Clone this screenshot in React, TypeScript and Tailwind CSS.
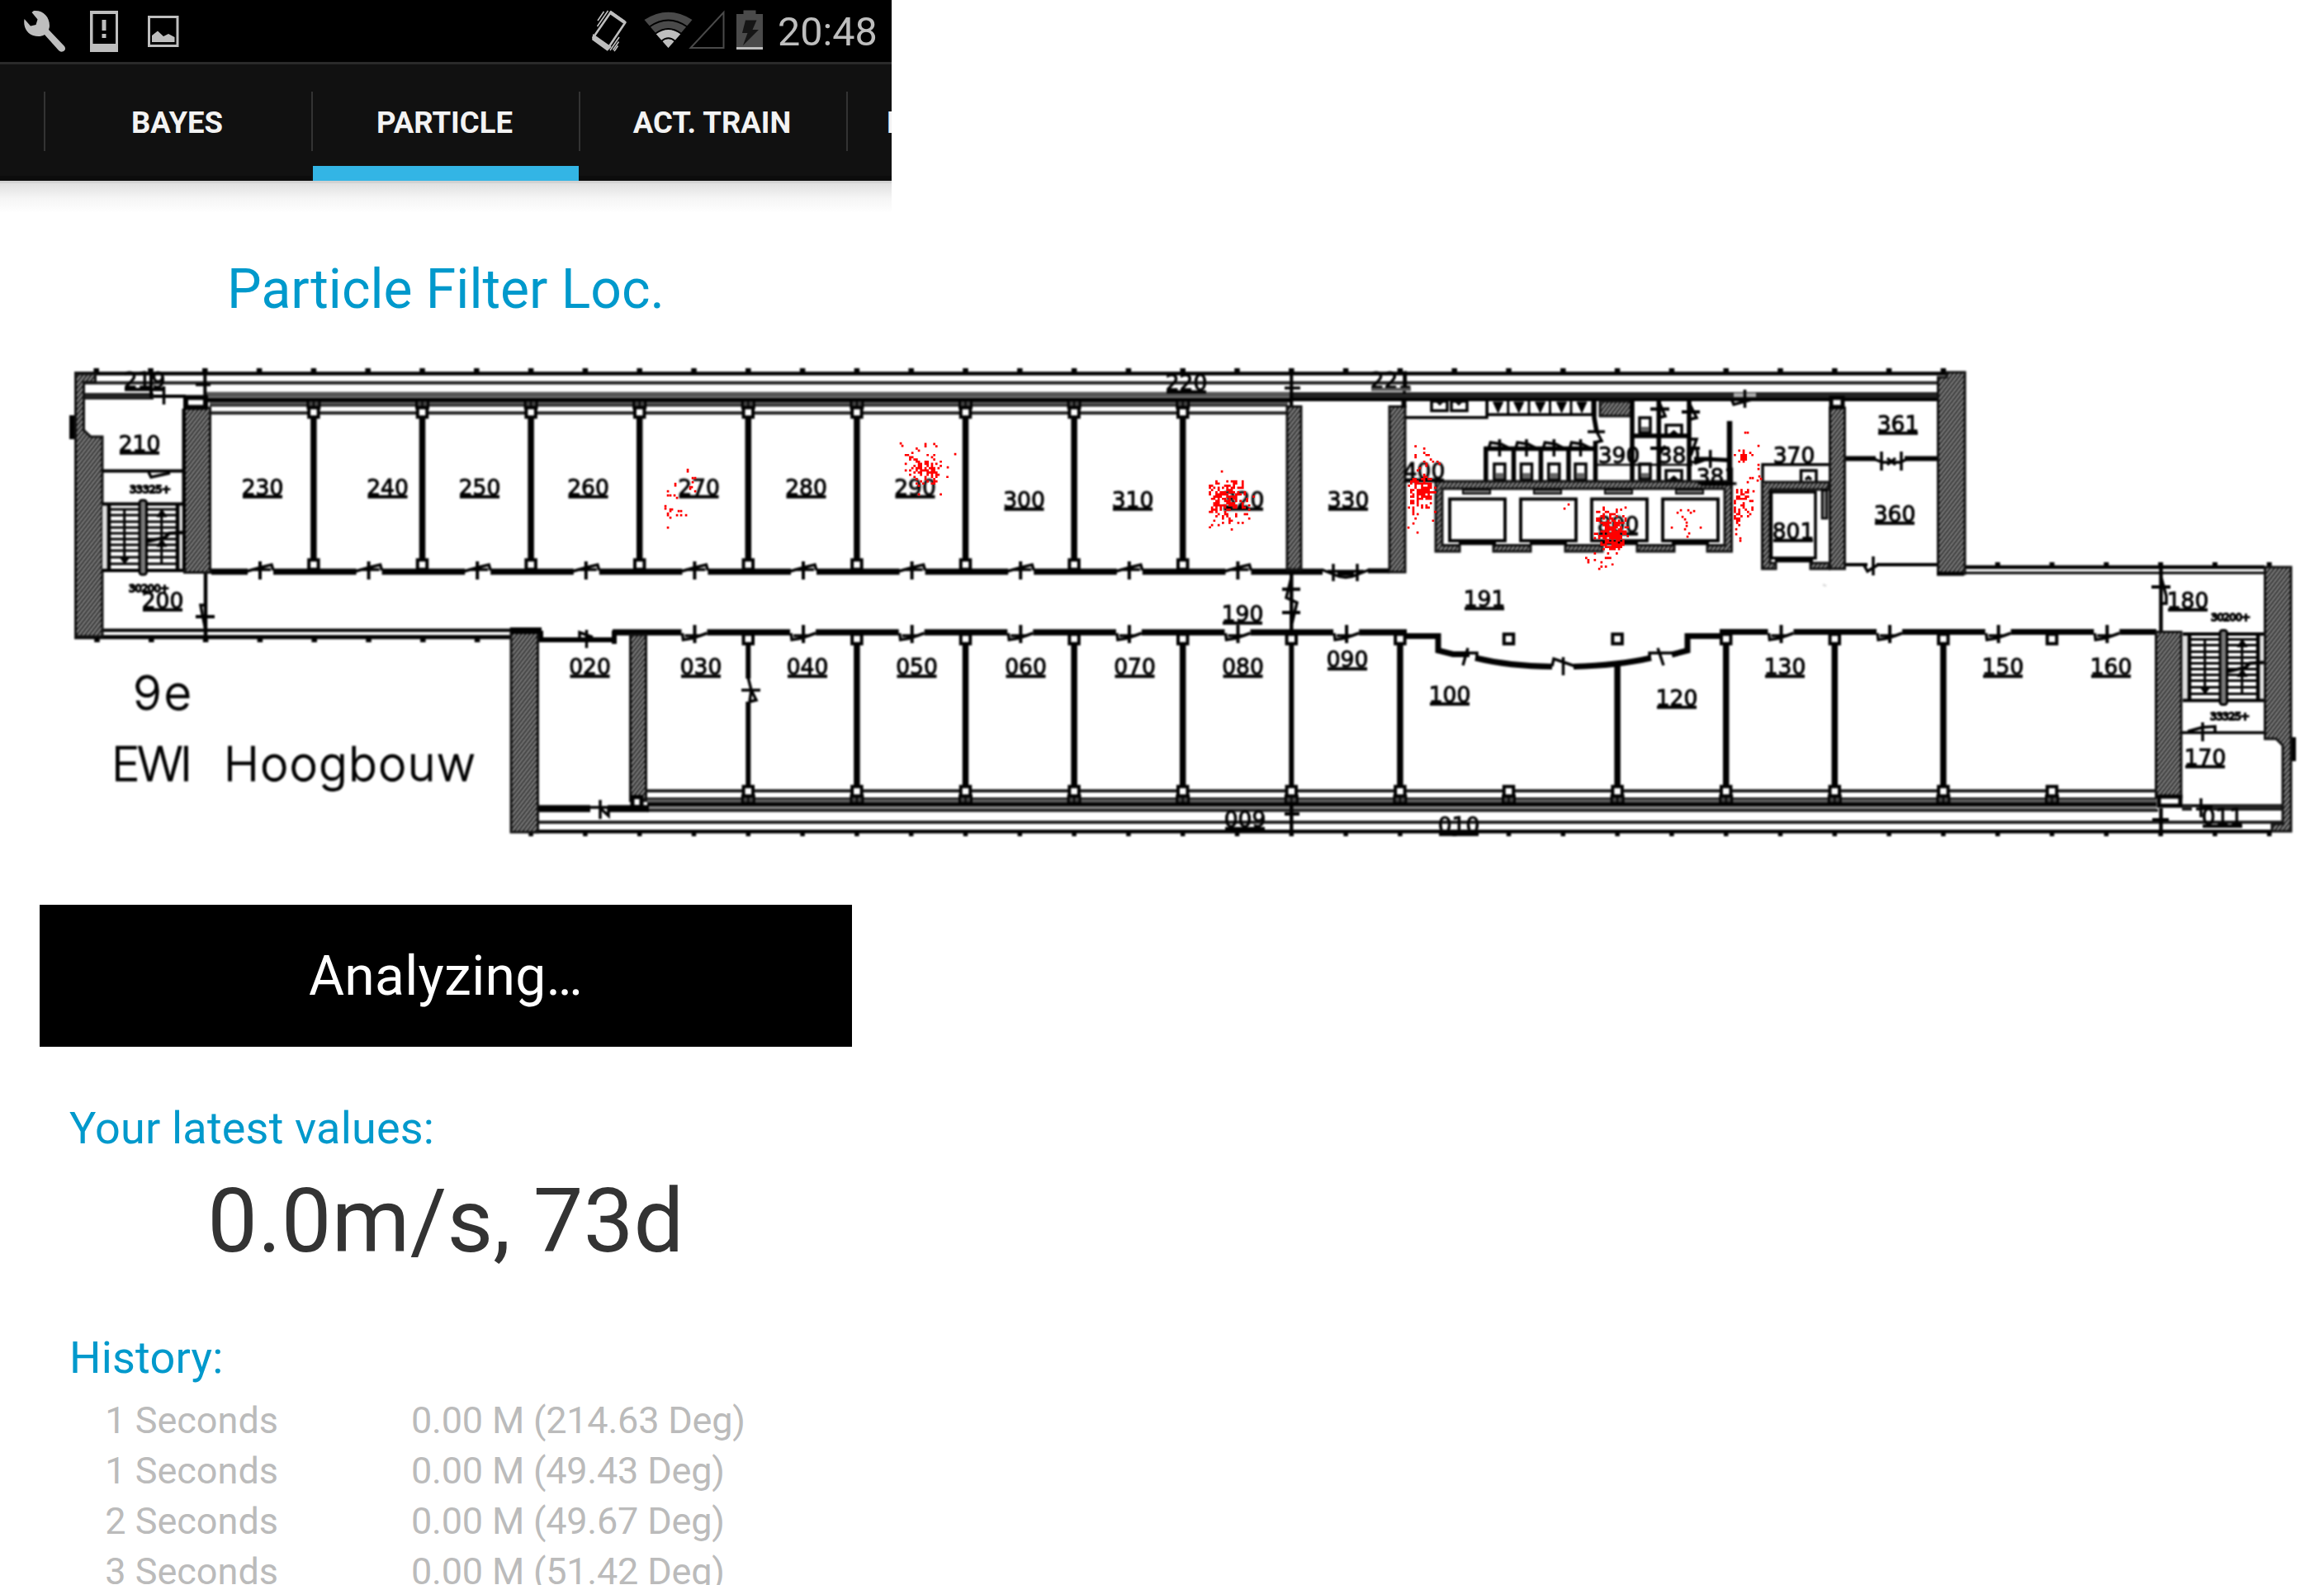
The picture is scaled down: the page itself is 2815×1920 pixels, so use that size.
import React from "react";

const PITCH = 131.6;
const col = (i: number) => 248.3 + PITCH * i;
const range = (a: number, b: number) => Array.from({ length: b - a + 1 }, (_, i) => a + i);

/* ---------- status bar ---------- */

function StatusBar() {
  return (
    <div className="flex h-[75px] items-center bg-black">
      <svg className="h-[75px] w-[240px]" viewBox="0 0 240 75" fill="#bebebe">
        <path d="M41 13C52 12 60 20 60 31C60 33 59.500 34.500 59 36L78 56C80 59 79 61.500 76 62.500C73 63 72 62 71 61L54 42C50 44.500 45 44.500 40 43C32 40 28 32 29.500 23L37 31.500L43.500 30L45.500 23.500L38.500 15Z" />
        <path fillRule="evenodd" d="M109 13H143V63H109ZM112.500 17V53H140V17ZM123.500 24H128.500V37H123.500ZM123.500 41H128.500V46H123.500Z" />
        <rect x="180.500" y="20.500" width="34.500" height="35" fill="none" stroke="#bebebe" strokeWidth="3" />
        <path d="M184 43L191 37.500L198 44L204 41L211.500 45V51H184Z" />
      </svg>
      <svg className="ml-[460px] h-[75px] w-[230px]" viewBox="700 0 230 75">
        <g fill="none" stroke="#bebebe">
          <path d="M740 14.500L757.500 27L736 59L718.500 45.500Z" strokeWidth="2.600" strokeLinejoin="round" />
          <path d="M719.500 44L738 57L735.500 59.500L719 47.500Z" strokeWidth="3.500" fill="#bebebe" />
          <path d="M738.500 14.500L756.500 27" strokeWidth="4" />
          <path d="M736.500 13L723.500 32M731.500 14L724 25M742.500 60.500L749.500 50.500M739 61L750 45M744 62L748.500 55.500" strokeWidth="1.600" />
        </g>
        <g>
          <path d="M809.500 58L780.500 24Q809.500 5.500 838.500 24Z" fill="#4a4a4a" />
          <path d="M809.500 58L794.500 41Q809.500 30.500 824.500 41Z" fill="#bebebe" />
          <g fill="none" stroke="#000" strokeWidth="1.800">
            <path d="M786.500 32.500Q809.500 16.500 832.500 32.500M793.500 41Q809.500 29 825.500 41M801 50Q809.500 42.500 818 50" />
          </g>
        </g>
        <path d="M836.500 58H876.500V15Z" fill="none" stroke="#4a4a4a" strokeWidth="2" />
        <path d="M892 17H900.500V12.500H915.500V17H924V57H892Z" fill="#4a4a4a" />
        <rect x="892" y="57" width="32" height="3" fill="#bebebe" />
        <path d="M903 24.500H916.500L911.500 36H919L900 55L905.500 40H899Z" fill="#151515" />
      </svg>
      <span className="ml-[12px] pt-[2px] text-[48.500px] leading-[75px] text-[#bebebe]">20:48</span>
    </div>
  );
}

/* ---------- tabs ---------- */

function Tab({ label, active }: { label: string; active?: boolean }) {
  return (
    <div className="flex h-[141px] w-[324px] shrink-0 flex-col">
      <div className="mt-[33px] flex h-[72px] items-center justify-center border-l-2 border-[#333333] pt-[4px] pr-[3px] text-[36.500px] font-bold text-[#f3f3f3]">
        {label}
      </div>
      <div className={active ? "mt-[18px] ml-[2px] h-[18px] bg-[#33b5e5]" : "mt-[30px] h-[6px] bg-[#0c0c0c]"} />
    </div>
  );
}

function TabBar() {
  return (
    <div className="flex h-[144px] overflow-hidden border-t-[3px] border-[#2a2a2a] bg-[#111111]">
      <div className="mt-[135px] h-[6px] w-[53px] shrink-0 bg-[#0c0c0c]" />
      <Tab label="BAYES" />
      <Tab label="PARTICLE" active />
      <Tab label="ACT. TRAIN" />
      <div className="flex h-[141px] w-[324px] shrink-0 flex-col">
        <div className="mt-[33px] flex h-[72px] items-center border-l-2 border-[#333333] pt-[4px] pl-[47px] text-[36.500px] font-bold text-[#f3f3f3]">
          MAP
        </div>
        <div className="mt-[30px] h-[6px] bg-[#0c0c0c]" />
      </div>
    </div>
  );
}

/* ---------- floor plan ---------- */

const rooms: [string, number, number][] = [
  ["219", 175, 470], ["210", 169, 547], ["200", 197, 737], ["230", 318, 600], ["240", 469.5, 600],
  ["250", 581, 600], ["260", 712.5, 600], ["270", 846.5, 600], ["280", 976.5, 600], ["290", 1108.5, 600],
  ["300", 1240.5, 615], ["310", 1372, 615], ["320", 1506, 615], ["330", 1633, 615], ["220", 1437, 473],
  ["221", 1685, 470], ["190", 1505, 753], ["191", 1798, 735.5], ["400", 1725, 580], ["390", 1961, 561],
  ["380", 2034, 561], ["381", 2080, 587], ["370", 2173, 561], ["801", 2172, 653], ["800", 1960, 645],
  ["361", 2299, 523], ["360", 2295, 632], ["180", 2650, 737], ["170", 2671, 927], ["011", 2692, 999],
  ["020", 714.5, 817.5], ["030", 849, 817.5], ["040", 978, 817.5], ["050", 1110.5, 817.5], ["060", 1242.5, 817.5],
  ["070", 1374.5, 817.5], ["080", 1505.5, 817.5], ["090", 1632, 808.5], ["009", 1508, 1002], ["010", 1767, 1009],
  ["100", 1756, 851], ["120", 2031, 855], ["130", 2162, 817.5], ["150", 2426, 817.5], ["160", 2557, 817.5],
];

function Hatch({ d }: { d: string }) {
  return <path d={d} fill="url(#hatch)" stroke="#111" strokeWidth="3" />;
}

function Box({ x, y, w = 11.5, h = 11.5, s = 4 }: { x: number; y: number; w?: number; h?: number; s?: number }) {
  return <rect x={x - w / 2} y={y - h / 2} width={w} height={h} fill="#fff" stroke="#000" strokeWidth={s} />;
}

function Stairs({ dx, dy }: { dx: number; dy: number }) {
  return (
    <g transform={`translate(${dx} ${dy})`} stroke="#000" fill="none">
      <rect x="124" y="612" width="6" height="78" fill="#ddd" stroke="none" />
      <rect x="216" y="612" width="5" height="78" fill="#ddd" stroke="none" />
      <path d="M124 610.500H222M124 691H222" strokeWidth="4" />
      <path d="M132 610V690M215 610V690" strokeWidth="4.500" />
      {[617, 624, 632, 639, 646, 653, 660, 667, 675, 683].map((y) => (
        <path key={y} d={`M133 ${y}H214`} strokeWidth="3" />
      ))}
      <path d="M150.700 618V680M195.700 620V684" strokeWidth="3" />
      <path d="M145 675H157L151 683ZM190 626H202L196 617ZM190 662H202L196 653Z" fill="#000" />
      <path d="M178 656L200 651L205 646L222 645" strokeWidth="4" />
      <rect x="169" y="606" width="8.500" height="90" rx="3" fill="#777" strokeWidth="3" />
    </g>
  );
}

function Plan() {
  const upperDoors = range(0, 9).map((i) => 315 + PITCH * i);
  const lowerDoors = [...range(0, 6), 10, 11, 12, 13].map((i) => 841.5 + PITCH * i);
  const upperEdges = [256, ...upperDoors.flatMap((x) => [x - 15, x + 16]), 1602];
  const lowerLeft = [742, ...range(0, 6).flatMap((i) => [841.5 + PITCH * i - 16, 841.5 + PITCH * i + 15]), 1704];
  const lowerRight = [2083, ...range(10, 13).flatMap((i) => [841.5 + PITCH * i - 16, 841.5 + PITCH * i + 15]), 2612];
  const walls = (edges: number[], y: number) =>
    range(0, edges.length / 2 - 1).map((k) => `M${edges[2 * k]} ${y}H${edges[2 * k + 1]}`).join("");
  return (
    <g className="blur-[0.8px]">
      {/* outer façade, north side */}
      <g stroke="#000" fill="none">
        <path d="M90 452.500H2358" strokeWidth="4.500" />
        <path d="M102 463.700H2346" strokeWidth="4" stroke="#222" />
        <path d="M250 478H1562" strokeWidth="6.500" stroke="#555" />
        <path d="M250 484.500H1562" strokeWidth="5.500" />
        <path d="M254 489.500H1560" strokeWidth="5.500" stroke="#555" />
        <path d="M254 491.500H1560" strokeWidth="1.500" />
        <path d="M256 500.300H1560" strokeWidth="4" stroke="#222" />
        <path d="M1562 480H2346" strokeWidth="10" stroke="#222" />
        <path d="M1562 484H2346" strokeWidth="4" />
        <path d="M102 480H186" strokeWidth="8" stroke="#222" />
        <path d="M186 480H225" strokeWidth="4" />
        {range(0, 34).map((k) => (
          <path key={k} d={`M${116.7 + 65.8 * k} 446V453`} strokeWidth="6.500" />
        ))}
        <path d="M183 446V482M248.300 446V482M1564.300 446V495M1564 495V480" strokeWidth="4" />
        <path d="M237 466H255M1556 470H1575M1701 452V477M198.500 468V490M188 471H200" strokeWidth="3.500" />
      </g>

      {/* long façade lines, south side */}
      <g stroke="#000" fill="none">
        <path d="M125 763.500H620" strokeWidth="4" />
        <path d="M90 771.800H618" strokeWidth="5" />
        {range(0, 7).map((k) => (
          <path key={k} d={`M${117.5 + 65.8 * k} 772V778`} strokeWidth="6.500" />
        ))}
        <path d="M2379 687H2743" strokeWidth="4.500" />
        <path d="M2379 694H2743" strokeWidth="3" />
        {range(35, 40).map((k) => (
          <path key={k} d={`M${116.7 + 65.8 * k} 681V688`} strokeWidth="6" />
        ))}
        <path d="M784 958H2610" strokeWidth="4" stroke="#222" />
        <path d="M784 969.500H2612" strokeWidth="7" stroke="#5a5a5a" />
        <path d="M784 967H2612" strokeWidth="1.500" />
        <path d="M784 974.500H2612" strokeWidth="4.500" />
        <path d="M784 978.500H2612" strokeWidth="3" stroke="#888" />
        <path d="M784 981.800H2614" strokeWidth="3.500" stroke="#1a1a1a" />
        <path d="M652 996H2764" strokeWidth="4" stroke="#222" />
        <path d="M645 1007.300H2752" strokeWidth="4.500" />
        {range(8, 40).map((k) => (
          <path key={k} d={`M${116.7 + 65.8 * k} 1007V1013`} strokeWidth="5.500" />
        ))}
        <path d="M652 979.500H715M736 979.500H786" strokeWidth="8.500" />
        <path d="M714 978H738M727 969V992M727 979L737 988V979" strokeWidth="3.500" />
        <path d="M2643 978H2655M2680 978H2764" strokeWidth="8" stroke="#222" />
        <path d="M2655 976H2680M2666 967V990M2660 980L2680 979" strokeWidth="3.500" />
      </g>

      {/* corridor walls */}
      <g stroke="#000" fill="none">
        <path d={walls(upperEdges, 692.5)} strokeWidth="7.500" />
        <path d="M1657 691.500H1683" strokeWidth="6" />
        <path d="M1601 690L1616 696Q1630 703 1644 696L1659 690M1608 692H1652M1615 683V704M1644 683V704" strokeWidth="3.500" />
        <path d="M1620 695H1640" strokeWidth="5" />
        <path d={walls(lowerLeft, 766)} strokeWidth="7.500" />
        <path d={walls(lowerRight, 765.5)} strokeWidth="7" />
        {upperDoors.map((x) => (
          <g key={x}>
            <path d={`M${x - 16} 692L${x + 2} 687L${x + 14} 684L${x + 16} 691M${x - 10} 690H${x + 13}`} strokeWidth="3.500" />
            <path d={`M${x} 680V702`} strokeWidth="4" />
          </g>
        ))}
        {lowerDoors.map((x) => (
          <g key={x}>
            <path d={`M${x - 15} 767L${x - 14} 775L${x - 2} 773L${x + 15} 767M${x - 12} 770H${x + 8}`} strokeWidth="3.500" />
            <path d={`M${x} 757V779`} strokeWidth="4" />
          </g>
        ))}
        <path d="M652 775H745M655 764V778M744 764V780" strokeWidth="6" />
        <path d="M710.500 763V785M702 773V766L718 772" strokeWidth="3.500" />
        {/* curved lobby wall */}
        <path d="M1700 770.500H1742V788L1760 792.500L1780 792.500" strokeWidth="7" />
        <path d="M1787 797Q1828 807 1880 807.500M1906 807.500Q1960 806 2000 797M2025 793L2044 788V770.500H2086" strokeWidth="7" />
        <path d="M1770 791L1789 791V799M1778 785L1772 806M1880 807L1882 798L1908 807M1893.500 796V818M1998 797V791L2028 791M2008 785L2015 806" strokeWidth="3.500" />
        {/* cross doors in the corridor */}
        <path d="M249 695V775M1564.300 695V766M2617.500 681V766M2617.500 979V1012M1564.300 975V1012" strokeWidth="4.500" />
        <path d="M237 747H260M1553 713.700H1575M1553 742H1575M2606 711H2629M2607 993H2627M1556 986H1574" strokeWidth="4" />
        <path d="M249 733L243 733L245 744L249 763M1564 700L1558 724L1571 730L1565 755M2618 700L2624 722V731H2619" strokeWidth="3.500" />
      </g>

      {/* partitions and columns */}
      {range(1, 9).map((i) => (
        <g key={i}>
          <path d={`M${col(i)} 505V678`} stroke="#000" strokeWidth="7.500" />
          <rect x={col(i) - 7} y="485" width="14" height="9" fill="#444" stroke="#000" strokeWidth="3" />
          <path d={`M${col(i)} 485V494`} stroke="#000" strokeWidth="2" />
          <Box x={col(i)} y={499.5} />
          <Box x={col(i)} y={684} />
        </g>
      ))}
      {[5, 6, 7, 8, 9, 10, 11, 14, 15, 16].map((i) => (
        <path key={i} d={i === 5 ? `M${col(5)} 780V822M${col(5)} 850V953` : `M${col(i)} 780V953`} stroke="#000" strokeWidth={i === 10 || i === 5 ? 6 : 7.5} />
      ))}
      <path d={`M${col(13)} 804V953`} stroke="#000" strokeWidth="7.500" />
      <path d="M906 820L910 836L908 850M898 836H921M910 836L916 848L908 850" fill="none" stroke="#000" strokeWidth="3.500" />
      {range(5, 17).map((i) => (
        <g key={i}>
          <Box x={col(i)} y={774} />
          <rect x={col(i) - 7} y="964" width="14" height="9" fill="#444" stroke="#000" strokeWidth="3" />
          <path d={`M${col(i)} 964V973`} stroke="#000" strokeWidth="2" />
          <Box x={col(i)} y={958.5} />
        </g>
      ))}

      {/* stair wings */}
      <rect x="84" y="503" width="7" height="29" fill="#000" />
      <rect x="2775" y="893" width="6" height="29" fill="#000" />
      <Hatch d="M91.500 453V771H124V529H110L101.500 521V463H115.500V453Z" />
      <Hatch d="M223.500 494H254.500V693.500H223.500Z" />
      <Box x={237} y={487.500} w={24} h={12} s={6} />
      <path d="M124 570.500H222M222.500 495V690" stroke="#000" strokeWidth="4" />
      <path d="M180 572L183 578L206 573" fill="none" stroke="#000" strokeWidth="3.500" />
      <Stairs dx={0} dy={0} />
      <Stairs dx={2520} dy={157.500} />
      <Hatch d="M619 762H651.500V1008H619Z" />
      <path d="M618 764H656" stroke="#000" strokeWidth="8" />
      <Hatch d="M763.500 769H782.500V970H763.500Z" />
      <Box x={771.500} y={971.500} w={11} h={12} s={5} />
      <Hatch d="M2347.500 457H2358V451H2380V695H2347.500Z" />
      <path d="M2346 695H2379" stroke="#000" strokeWidth="5" />
      <Hatch d="M2743.500 687H2775V1007H2752V998H2765V903L2757 895H2743.500Z" />
      <Hatch d="M2611.500 765.500H2642V966H2611.500Z" />
      <Box x={2628} y={970.500} w={26} h={11} s={5} />
      <path d="M2643 887.500H2742" stroke="#000" strokeWidth="3.500" />
      <path d="M2668 875V898M2650 886L2668 881L2683 880V887" fill="none" stroke="#000" strokeWidth="3.500" />

      {/* core */}
      <Hatch d="M1559 492.500H1576V690H1559Z" />
      <Hatch d="M1683 492.500H1702V693H1683Z" />
      <path d="M1700.500 484V494" stroke="#000" strokeWidth="6" />
      <g stroke="#000" fill="none" strokeWidth="3.500">
        <path d="M1703 505.700H1801V486M1801 502.300H1931" />
        <rect x="1734" y="486" width="19" height="11.500" />
        <rect x="1758" y="486" width="19" height="11.500" />
        <path d="M1741 487L1744 490L1747 487M1764 487L1767 490L1770 487" strokeWidth="2" />
        {[1814.6, 1839.7, 1865.6, 1891.5, 1916].map((x) => (
          <path key={x} d={`M${x - 6} 487H${x + 6}L${x} 500Z`} fill="#000" strokeWidth="1" />
        ))}
        <path d="M1801.500 485V503M1826.800 485V503M1852 485V503M1877.500 485V503M1903 485V503M1929 485V503" strokeWidth="3" />
      </g>
      <Hatch d="M1938 486H1976V504H1938Z" />
      <g stroke="#000" fill="none" strokeWidth="5.500">
        <path d="M1931 485V506L1934 523M1932.500 534V583M1977 485V583M2009.300 485V583M2046 485V583M1978 528H2048" />
        <path d="M1799.800 541V583M1833.500 541V583M1866.400 541V583M1900 541V583M1798 543.500H1932" />
        <path d="M2095 510V590" strokeWidth="6.500" />
      </g>
      {[1816.4, 1849, 1882.3, 1914.5].map((x) => (
        <g key={x} stroke="#000" fill="none" strokeWidth="3.500">
          <path d={`M${x - 13} 543L${x - 11} 536L${x + 2} 538L${x + 12} 543M${x} 532V553`} />
          <rect x={x - 6.5} y="562" width="13" height="19" />
          <rect x={x - 5} y="573" width="10" height="7" fill="#666" stroke="none" />
        </g>
      ))}
      <g stroke="#000" fill="none" strokeWidth="3.500">
        <path d="M1923 523H1944M1934 523L1940 534L1932 536" />
        <path d="M1935 563H2050" strokeWidth="2.500" />
        {[506, 562].map((y) => (
          <g key={y}>
            <rect x="1986" y={y} width="13" height="18" />
            <rect x="1988" y={y + 11} width="9" height="6" fill="#666" stroke="none" />
          </g>
        ))}
        <path d="M2018 527V515H2037V527ZM2018 582V570H2037V582ZM2024 526L2027.500 523L2031 526M2024 581L2027.500 578L2031 581" />
        <path d="M1999 495.500H2022M2037 499H2059M1999 543H2022M2045 543H2059" strokeWidth="4" />
        <path d="M2010 488L2017 504L2009 506M2047 490L2055 506L2047 508M2009 552L2017 540M2047 532H2055L2048 552" />
        <path d="M2052 561L2066 556L2095 557.500M2052 556H2074" strokeWidth="5" />
        <path d="M2071.700 545V567" />
      </g>
      <path d="M2100 476H2127V481H2100Z" fill="#aaa" />
      <path d="M2113.500 472V494M2098 485L2100 490L2122 484" fill="none" stroke="#000" strokeWidth="3.500" />

      {/* lifts */}
      <Hatch d="M1739 583H2097.500V668H2068V660.500H2089V592H1747V660.500H1768V668H1739Z" />
      {[1809, 1896, 1983].map((x) => (
        <Hatch key={x} d={`M${x} 660.500H${x + 45}V668H${x}Z`} />
      ))}
      <path d="M1703 582H1745M2060 586H2098" stroke="#000" strokeWidth="5" />
      {[1756, 1842, 1928, 2014].map((x) => (
        <g key={x} stroke="#000" fill="none">
          <rect x={x} y="604.500" width="67" height="50.500" strokeWidth="3.800" />
          <path d={`M${x + 11} 658H${x + 56}`} strokeWidth="4.500" />
          <rect x={x + 16} y="593" width="33" height="5" fill="#777" strokeWidth="2" />
        </g>
      ))}
      <Hatch d="M2134.500 584H2215V593H2144V682H2151V689H2134.500Z" />
      <Hatch d="M2193 682H2216V689H2193Z" />
      <Hatch d="M2216.500 494H2234.500V689H2216.500Z" />
      <Box x={2225} y={487.500} w={14} h={11} s={5} />
      <g stroke="#000" fill="none" strokeWidth="3.500">
        <path d="M2135 583V562.700H2215M2181.500 583V570H2200V583M2187 581L2190.500 578L2194 581" />
        <path d="M2145.500 596H2199V676H2145.500Z" />
        <path d="M2150 679H2196" strokeWidth="4.500" />
        <rect x="2207" y="594" width="6" height="34" fill="#777" strokeWidth="2.500" />
        <path d="M2236 555.600H2272M2307 555.600H2346" strokeWidth="6" />
        <path d="M2270 556L2280 560H2302L2310 556M2279 547V570M2303 547V570M2286 555L2296 563M2296 555L2286 563" />
        <path d="M2236 684H2262M2273 684H2346" strokeWidth="4" />
        <path d="M2258 685L2262 692L2275 684M2269 674V697" />
      </g>
      <path d="M2208 708L2212 710" stroke="#ddd" strokeWidth="3" />

      {/* labels */}
      {rooms.map(([name, x, y]) => {
        const bare = name === "390" || name === "380" || name === "370" || name === "381";
        return (
          <g key={name}>
            <text x={x} y={y - 0.5} textAnchor="middle" fontSize="26.500" stroke="#000" strokeWidth="1" className="font-['DejaVu_Sans',sans-serif]">
              {name}
            </text>
            {!bare && <path d={`M${x - 24} ${y + 1.8}H${x + 24}`} stroke={name === "221" ? "#555" : "#000"} strokeWidth="4" />}
          </g>
        );
      })}
      <g fontSize="13" stroke="#000" strokeWidth="1.800" className="font-['DejaVu_Sans',sans-serif]">
        <text x="157" y="597" textLength="50">33325+</text>
        <text x="156" y="717" textLength="49">30200+</text>
        <text x="2678" y="752" textLength="48">30200+</text>
        <text x="2677" y="872" textLength="48">33325+</text>
      </g>
      <g fontSize="58" fontWeight="300" stroke="#000" strokeWidth="0.800" className="font-['Inter',sans-serif]">
        <text x="161" y="860" textLength="71">9e</text>
        <text x="135" y="946" textLength="98">EWI</text>
        <text x="271" y="946" textLength="305">Hoogbouw</text>
      </g>
    </g>
  );
}

/* ---------- particles ---------- */

type Cloud = { n: number; cx: number; cy: number; sx: number; sy: number; box: [number, number, number, number] };

const clouds: Cloud[] = [
  { n: 90, cx: 1121, cy: 570, sx: 11, sy: 12, box: [1097, 552, 1142, 590] },
  { n: 24, cx: 1124, cy: 562, sx: 22, sy: 24, box: [1090, 536, 1157, 602] },
  { n: 160, cx: 1483, cy: 600, sx: 13, sy: 14, box: [1463, 582, 1512, 636] },
  { n: 50, cx: 1480, cy: 618, sx: 18, sy: 18, box: [1463, 580, 1521, 648] },
  { n: 110, cx: 1724, cy: 592, sx: 8, sy: 11, box: [1706, 576, 1734, 606] },
  { n: 60, cx: 1720, cy: 588, sx: 14, sy: 28, box: [1706, 528, 1745, 632] },
  { n: 160, cx: 1953, cy: 650, sx: 9, sy: 13, box: [1938, 610, 1968, 667] },
  { n: 60, cx: 1950, cy: 630, sx: 13, sy: 20, box: [1929, 610, 1978, 680] },
  { n: 16, cx: 1934, cy: 678, sx: 13, sy: 7, box: [1921, 670, 1964, 690] },
  { n: 20, cx: 2110, cy: 554, sx: 7, sy: 5, box: [2101, 540, 2123, 570] },
  { n: 54, cx: 2107, cy: 612, sx: 8, sy: 13, box: [2101, 583, 2123, 636] },
];

const singles: [number, number][] = [
  [833, 569], [833, 571], [839, 579], [842, 579], [818, 588], [818, 586], [809, 595], [809, 600], [812, 600], [817, 600],
  [820, 603], [836, 590], [838, 590], [836, 592], [839, 584], [842, 595], [806, 613], [806, 616], [812, 617], [814, 617],
  [812, 619], [809, 622], [809, 624], [812, 627], [822, 619], [825, 619], [820, 624], [825, 624], [831, 624], [809, 639],
  [1900, 611], [1895, 616], [1480, 571], [1717, 645], [1706, 639], [1712, 634], [1148, 566], [1157, 550], [1091, 537], [1093, 540],
  [2032, 621], [2036, 618], [2045, 618], [2048, 621], [2052, 619], [2038, 626], [2041, 629], [2043, 633], [2043, 637], [2041, 641],
  [2025, 639], [2060, 639], [2046, 646], [2044, 650], [2114, 524], [2117, 524], [2130, 540], [2130, 563], [2130, 568], [2131, 577],
  [2133, 580], [2129, 582], [2120, 579], [2123, 579], [2117, 584], [2103, 641], [2103, 647], [2108, 652], [2108, 655], [2124, 595],
];

function scatter(): [number, number][] {
  let seed = 90210;
  const rnd = () => {
    seed = (seed * 1664525 + 1013904223) % 4294967296;
    return seed / 4294967296;
  };
  const out: [number, number][] = [...singles];
  clouds.forEach(({ n, cx, cy, sx, sy, box }) => {
    let left = n;
    while (left > 0) {
      const r = Math.sqrt(-2 * Math.log(rnd() + 1e-9));
      const a = rnd() * Math.PI * 2;
      const x = Math.round((cx + r * Math.cos(a) * sx) / 2.65) * 2.65;
      const y = Math.round((cy + r * Math.sin(a) * sy) / 2.65) * 2.65;
      if (x < box[0] || x > box[2] || y < box[1] || y > box[3]) continue;
      out.push([x, y]);
      left -= 1;
    }
  });
  return out;
}

const dots = scatter();

function Particles() {
  return <path fill="#ff0000" d={dots.map(([x, y]) => `M${(x - 1.3).toFixed(1)} ${(y - 1.3).toFixed(1)}h2.700v2.700h-2.700z`).join("")} />;
}

function FloorPlan() {
  return (
    <svg className="mt-[40px] block h-[600px] w-[2815px]" viewBox="0 430 2815 600">
      <defs>
        <pattern id="hatch" width="4" height="4" patternUnits="userSpaceOnUse" patternTransform="rotate(38)">
          <rect width="4" height="4" fill="#1c1c1c" />
          <rect x="0" width="1.400" height="4" fill="#cccccc" />
        </pattern>
      </defs>
      <Plan />
      <Particles />
    </svg>
  );
}

/* ---------- page ---------- */

const history: [string, string][] = [
  ["1 Seconds", "0.00 M (214.63 Deg)"],
  ["1 Seconds", "0.00 M (49.43 Deg)"],
  ["2 Seconds", "0.00 M (49.67 Deg)"],
  ["3 Seconds", "0.00 M (51.42 Deg)"],
];

export default function App() {
  return (
    <div className="h-[1920px] w-[2815px] overflow-hidden bg-white font-['Roboto',sans-serif]">
      <div className="w-[1080px]">
        <StatusBar />
        <TabBar />
        <div className="h-[3px] bg-[#d2d2d2]" />
        <div className="h-[36px] bg-linear-to-b from-[#e0e0e0] via-[#f5f5f5] to-white" />
        <h1 className="mt-[52px] pt-px text-center text-[66px] leading-[79px] text-[#0099cc]">Particle Filter Loc.</h1>
      </div>
      <FloorPlan />
      <div className="w-[1080px]">
        <button className="mt-[66px] ml-[48px] block h-[172px] w-[984px] bg-black text-center text-[66px] tracking-[0.3px] text-white">Analyzing…</button>
        <h2 className="mt-[67px] ml-[84px] text-[54px] leading-[64px] tracking-[0.2px] text-[#0099cc]">Your latest values:</h2>
        <p className="mt-[16px] text-center text-[108px] leading-[128px] tracking-[0.2px] text-[#333333]">0.0m/s, 73d</p>
        <h2 className="mt-[70px] ml-[84px] text-[54px] leading-[64px] tracking-[0.2px] text-[#0099cc]">History:</h2>
        <div className="mt-[13px]">
          {history.map(([time, value]) => (
            <div key={value} className="flex text-[45px] leading-[61px] text-[#bbbbbb]">
              <span className="w-[337px] shrink-0 text-right">{time}</span>
              <span className="ml-[161px] whitespace-nowrap tracking-[-0.200px]">{value}</span>
            </div>
          ))}
        </div>
      </div>
    </div>
  );
}
